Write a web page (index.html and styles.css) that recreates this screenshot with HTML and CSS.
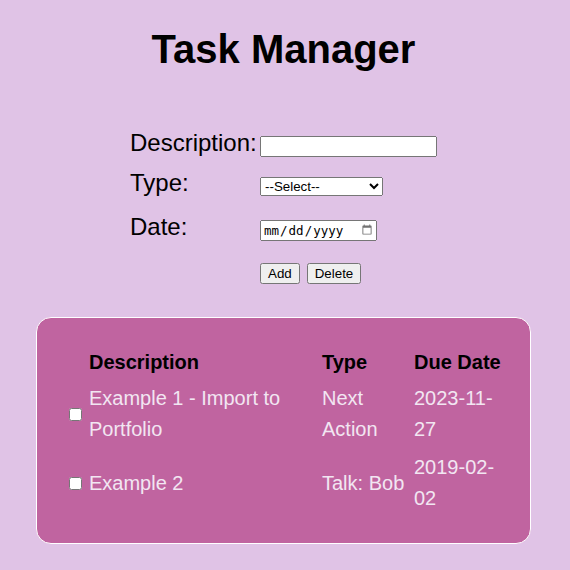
FILE: index.html
```html
<!DOCTYPE html>
<html lang="en">
<head>
<meta charset="utf-8">
<title>Task Manager</title>
<link rel="stylesheet" href="styles.css">
</head>
<body>
<h1 class="title">Task Manager</h1>
<form class="task-form">
  <label class="field-label" for="desc">Description:</label>
  <input class="field-text" id="desc" type="text">
  <label class="field-label" for="type">Type:</label>
  <select class="field-select" id="type">
    <option>--Select--</option>
    <option>Next Action</option>
    <option>Talk: Bob</option>
  </select>
  <label class="field-label" for="date">Date:</label>
  <input class="field-date" id="date" type="date">
  <div class="actions">
    <button type="button">Add</button>
    <button type="button">Delete</button>
  </div>
</form>
<div class="card">
  <table class="tasks">
    <colgroup>
      <col class="col-check">
      <col class="col-desc">
      <col class="col-type">
      <col class="col-date">
    </colgroup>
    <thead>
      <tr><th></th><th>Description</th><th>Type</th><th>Due Date</th></tr>
    </thead>
    <tbody>
      <tr>
        <td><input type="checkbox" class="check"></td>
        <td>Example 1 - Import to Portfolio</td>
        <td>Next Action</td>
        <td>2023-11-27</td>
      </tr>
      <tr>
        <td><input type="checkbox" class="check"></td>
        <td>Example 2</td>
        <td>Talk: Bob</td>
        <td>2019-02-02</td>
      </tr>
    </tbody>
  </table>
</div>
</body>
</html>
```
FILE: styles.css
```css
html {
  background: #e0c3e6;
}
body {
  margin: 0 11px 8px 8px;
  padding-top: 1px;
  font-family: "Liberation Sans", Arial, sans-serif;
  color: #000;
}
.title {
  font-size: 40px;
  font-weight: bold;
  text-align: center;
  margin: 26px 0 27px;
  line-height: normal;
}
.task-form {
  margin: 57px 0 0;
  display: grid;
  grid-template-columns: 130px 177px;
  grid-template-rows: 40px 44px 50px auto;
  justify-content: center;
  align-items: baseline;
}
.field-label {
  font-size: 24px;
}
.field-text {
  box-sizing: border-box;
  width: 177px;
  font-family: "Liberation Sans", Arial, sans-serif;
}
.field-select {
  box-sizing: border-box;
  width: 123px;
  font-family: "Liberation Sans", Arial, sans-serif;
}
.field-date {
  box-sizing: border-box;
  width: 117px;
  font-family: monospace;
  font-size: 12.5px;
}
.field-date::-webkit-calendar-picker-indicator {
  opacity: 0.55;
  margin-left: 4px;
}
.actions {
  grid-column: 2;
  display: flex;
  gap: 7px;
  align-self: start;
}
.actions button {
  font-family: "Liberation Sans", Arial, sans-serif;
  margin: 0;
}
.card {
  box-sizing: border-box;
  width: 495px;
  margin: 33px auto 0;
  padding: 26px 26px 25px 28px;
  background: #c064a0;
  border: 1px solid #fff;
  border-radius: 15px;
}
.tasks {
  table-layout: fixed;
  width: 439px;
  border-collapse: collapse;
  border-spacing: 0;
  font-size: 20px;
  line-height: 31px;
}
.col-check { width: 24px; }
.col-desc { width: 233px; }
.col-type { width: 92px; }
.col-date { width: 90px; }
.tasks th {
  text-align: left;
  font-weight: bold;
  color: #000;
  padding: 3px 0 2px;
  vertical-align: middle;
}
.tasks td {
  color: #f2e6f2;
  padding: 3px 0 4px;
  vertical-align: middle;
}
.check {
  display: block;
  margin: 3px 3px 3px 4px;
}
```
